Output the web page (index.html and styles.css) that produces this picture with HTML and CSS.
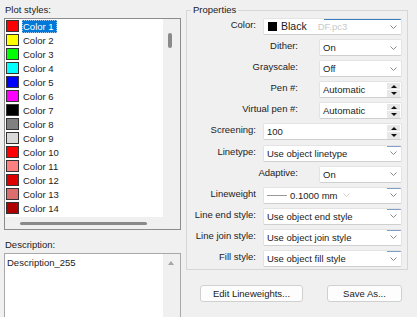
FILE: index.html
```html
<!DOCTYPE html>
<html lang="en">
  <head>
    <meta charset="UTF-8" />
    <title>Plot Style Table Editor</title>
    <link rel="stylesheet" href="styles.css">
  </head>
  <body>
    <div class="dialog">
      <!-- 왼쪽: 플롯 스타일 목록 -->
      <div class="left">
        <div class="cap">Plot styles:</div>
        <div class="listbox">
          <ul class="styles">
            <li><span class="sw" style="background:#ff0000"></span><span class="nm sel">Color 1</span></li>
            <li><span class="sw" style="background:#ffff00"></span><span class="nm">Color 2</span></li>
            <li><span class="sw" style="background:#00ff00"></span><span class="nm">Color 3</span></li>
            <li><span class="sw" style="background:#00ffff"></span><span class="nm">Color 4</span></li>
            <li><span class="sw" style="background:#0000ff"></span><span class="nm">Color 5</span></li>
            <li><span class="sw" style="background:#ff00ff"></span><span class="nm">Color 6</span></li>
            <li><span class="sw" style="background:#000000"></span><span class="nm">Color 7</span></li>
            <li><span class="sw" style="background:#808080"></span><span class="nm">Color 8</span></li>
            <li><span class="sw" style="background:#d9d9d9"></span><span class="nm">Color 9</span></li>
            <li><span class="sw" style="background:#ff0000"></span><span class="nm">Color 10</span></li>
            <li><span class="sw" style="background:#ff8080"></span><span class="nm">Color 11</span></li>
            <li><span class="sw" style="background:#dd0000"></span><span class="nm">Color 12</span></li>
            <li><span class="sw" style="background:#dd6e6e"></span><span class="nm">Color 13</span></li>
            <li><span class="sw" style="background:#b00000"></span><span class="nm">Color 14</span></li>
          </ul>
          <div class="vscroll"><span class="vthumb"></span></div>
          <div class="hscroll"><span class="hthumb"></span></div>
          <div class="corner"></div>
        </div>
        <div class="cap desc-cap">Description:</div>
        <div class="descbox">
          <div class="desc-text">Description_255</div>
          <div class="vscroll">
            <svg class="uparrow" width="6" height="4" viewBox="0 0 6 4"><polygon points="0,4 3,0 6,4" fill="#a6a6a6"/></svg>
          </div>
        </div>
      </div>

      <!-- 오른쪽: 속성 -->
      <div class="right">
        <fieldset class="props">
          <legend>Properties</legend>
          <div class="row">
            <label>Color:</label>
            <div class="field combo color-combo">
              <span class="val"><span class="black-sw"></span>Black<span class="ghost">DF.pc3</span></span>
              <svg class="chev" width="7" height="4" viewBox="0 0 7 4"><polyline points="0.5,0.5 3.5,3.5 6.5,0.5" fill="none" stroke="#8a8a8a"/></svg>
            </div>
          </div>
          <div class="row narrow">
            <label>Dither:</label>
            <div class="field combo">
              <span class="val">On</span>
              <svg class="chev" width="7" height="4" viewBox="0 0 7 4"><polyline points="0.5,0.5 3.5,3.5 6.5,0.5" fill="none" stroke="#8a8a8a"/></svg>
            </div>
          </div>
          <div class="row narrow">
            <label>Grayscale:</label>
            <div class="field combo">
              <span class="val">Off</span>
              <svg class="chev" width="7" height="4" viewBox="0 0 7 4"><polyline points="0.5,0.5 3.5,3.5 6.5,0.5" fill="none" stroke="#8a8a8a"/></svg>
            </div>
          </div>
          <div class="row narrow">
            <label>Pen #:</label>
            <div class="field spinner">
              <span class="val">Automatic</span>
              <span class="spin"><span class="up"></span><span class="down"></span></span>
            </div>
          </div>
          <div class="row narrow">
            <label>Virtual pen #:</label>
            <div class="field spinner">
              <span class="val">Automatic</span>
              <span class="spin"><span class="up"></span><span class="down"></span></span>
            </div>
          </div>
          <div class="row">
            <label>Screening:</label>
            <div class="field spinner">
              <span class="val">100</span>
              <span class="spin"><span class="up"></span><span class="down"></span></span>
            </div>
          </div>
          <div class="row">
            <label>Linetype:</label>
            <div class="field combo accent">
              <span class="val">Use object linetype</span>
              <svg class="chev" width="7" height="4" viewBox="0 0 7 4"><polyline points="0.5,0.5 3.5,3.5 6.5,0.5" fill="none" stroke="#8a8a8a"/></svg>
            </div>
          </div>
          <div class="row narrow">
            <label>Adaptive:</label>
            <div class="field combo">
              <span class="val">On</span>
              <svg class="chev" width="7" height="4" viewBox="0 0 7 4"><polyline points="0.5,0.5 3.5,3.5 6.5,0.5" fill="none" stroke="#8a8a8a"/></svg>
            </div>
          </div>
          <div class="row">
            <label>Lineweight</label>
            <div class="field combo accent">
              <span class="val"><svg class="lw" width="20" height="5" viewBox="0 0 20 5"><line x1="0" y1="2.5" x2="20" y2="2.5" stroke="#9a9a9a"/></svg>0.1000 mm<svg class="ghost-chev" width="7" height="4" viewBox="0 0 7 4"><polyline points="0.5,0.5 3.5,3.5 6.5,0.5" fill="none" stroke="#d0d0d0"/></svg></span>
              <svg class="chev" width="7" height="4" viewBox="0 0 7 4"><polyline points="0.5,0.5 3.5,3.5 6.5,0.5" fill="none" stroke="#8a8a8a"/></svg>
            </div>
          </div>
          <div class="row">
            <label>Line end style:</label>
            <div class="field combo accent">
              <span class="val">Use object end style</span>
              <svg class="chev" width="7" height="4" viewBox="0 0 7 4"><polyline points="0.5,0.5 3.5,3.5 6.5,0.5" fill="none" stroke="#8a8a8a"/></svg>
            </div>
          </div>
          <div class="row">
            <label>Line join style:</label>
            <div class="field combo accent">
              <span class="val">Use object join style</span>
              <svg class="chev" width="7" height="4" viewBox="0 0 7 4"><polyline points="0.5,0.5 3.5,3.5 6.5,0.5" fill="none" stroke="#8a8a8a"/></svg>
            </div>
          </div>
          <div class="row">
            <label>Fill style:</label>
            <div class="field combo accent">
              <span class="val">Use object fill style</span>
              <svg class="chev" width="7" height="4" viewBox="0 0 7 4"><polyline points="0.5,0.5 3.5,3.5 6.5,0.5" fill="none" stroke="#8a8a8a"/></svg>
            </div>
          </div>
        </fieldset>
        <div class="buttons">
          <button class="btn btn-edit">Edit Lineweights...</button>
          <button class="btn btn-save">Save As...</button>
        </div>
      </div>
    </div>
  </body>
</html>
```

FILE: styles.css
```css
* {
  box-sizing: border-box;
}
ul {
  list-style: none;
  margin: 0;
  padding: 0;
}
html,
body {
  margin: 0;
}
body {
  width: 417px;
  height: 317px;
  overflow: hidden;
  background: #f0f0f0;
  font-family: "Liberation Sans", Arial, sans-serif;
  font-size: 9.5px;
  color: #1b1b1b;
}

.dialog {
  display: flex;
  align-items: flex-start;
  gap: 5px;
  padding: 4px 0 0 4px;
}

/* 왼쪽 */
.left {
  width: 177px;
}
.cap {
  height: 14px;
  line-height: 12px;
  padding-left: 1px;
}
.desc-cap {
  margin-top: 8px;
  line-height: 14px;
  height: 15px;
}
.listbox {
  height: 212px;
  border: 1px solid #8c8c8c;
  background: #fff;
  display: grid;
  grid-template-columns: 1fr 17px;
  grid-template-rows: 1fr 12px;
}
.styles {
  overflow: hidden;
}
.styles > li {
  height: 14px;
  display: flex;
  align-items: center;
  padding-left: 1px;
}
.styles .sw {
  width: 13px;
  height: 12px;
  border: 1px solid #333;
  margin-right: 3px;
}
.styles .nm {
  height: 13px;
  line-height: 13px;
  padding: 0 1px;
}
.styles .nm.sel {
  background: #0078d7;
  color: #fff;
  outline: 1px dotted #9cc7ee;
  outline-offset: -1px;
  padding-right: 3px;
}
.vscroll {
  background: #f0f0f0;
  display: flex;
  justify-content: flex-start;
  padding-left: 5px;
}
.vthumb {
  width: 4px;
  height: 15px;
  margin-top: 14px;
  border-radius: 2px;
  background: #8a8a8a;
}
.hscroll {
  background: #f0f0f0;
  padding: 5px 0 0 15px;
}
.hthumb {
  display: block;
  width: 127px;
  height: 3px;
  border-radius: 2px;
  background: #8a8a8a;
}
.corner {
  background: #f0f0f0;
}
.descbox {
  height: 64px;
  border: 1px solid #a8a8a8;
  border-bottom: 0;
  background: #fff;
  display: grid;
  grid-template-columns: 1fr 17px;
}
.desc-text {
  padding: 2px 0 0 2px;
  line-height: 13px;
}
.uparrow {
  margin-top: 7px;
}

/* 오른쪽 */
.right {
  width: 222px;
}
.props {
  margin: 0;
  border: 1px solid #d6d6d6;
  padding: 2px 5px 2px 0;
  display: flex;
  flex-direction: column;
  gap: 4.1px;
}
.props > legend {
  margin-left: 4px;
  padding: 0 2px;
  line-height: 12px;
}
.row {
  display: flex;
  height: 17px;
}
.row > label {
  width: 69px;
  margin-right: 7px;
  text-align: right;
  line-height: 13px;
  white-space: nowrap;
}
.row.narrow > label {
  width: 111px;
  margin-right: 21px;
}
.field {
  flex: 1;
  height: 17px;
  background: #fff;
  border: 1px solid #e3e3e3;
  border-bottom-color: #cfcfcf;
  border-radius: 2px;
  display: flex;
  align-items: center;
  justify-content: space-between;
  padding-left: 3px;
  white-space: nowrap;
}
.field .val {
  display: flex;
  align-items: center;
  line-height: 15px;
}
.combo {
  padding-right: 4px;
}
.color-combo {
  background: linear-gradient(#3b7fc0, #3b7fc0) no-repeat right top / 77px 1px, #fff;
}
.accent {
  background: linear-gradient(#7f9fc4, #7f9fc4) no-repeat right top / 14px 1px, #fff;
}
.black-sw {
  width: 9px;
  height: 9px;
  background: #000;
  margin: 0 4px 0 1px;
}
.color-combo .val {
  font-size: 10.5px;
}
.ghost {
  color: #c9c9c9;
  font-size: 9.5px;
  margin-left: 11px;
}
.lw {
  margin: 0 3px 0 0;
}
.ghost-chev {
  margin-left: 5px;
}
.spinner {
  padding-right: 1px;
}
.spin {
  width: 13px;
  height: 14px;
  display: flex;
  flex-direction: column;
  gap: 1px;
}
.spin > span {
  flex: 1;
  background: #e8e8e8;
  display: flex;
  align-items: center;
  justify-content: center;
}
.spin > .up::before {
  content: "";
  border-left: 3px solid transparent;
  border-right: 3px solid transparent;
  border-bottom: 3px solid #111;
}
.spin > .down::before {
  content: "";
  border-left: 3px solid transparent;
  border-right: 3px solid transparent;
  border-top: 3px solid #111;
}

.buttons {
  display: flex;
  gap: 24px;
  padding-left: 14px;
  margin-top: 15px;
}
.btn {
  height: 17px;
  background: #fdfdfd;
  border: 1px solid #d0d0d0;
  border-radius: 3px;
  font-family: inherit;
  font-size: 9.5px;
  color: #1b1b1b;
  padding: 0;
}
.btn-edit {
  width: 103px;
}
.btn-save {
  width: 75px;
}
```
